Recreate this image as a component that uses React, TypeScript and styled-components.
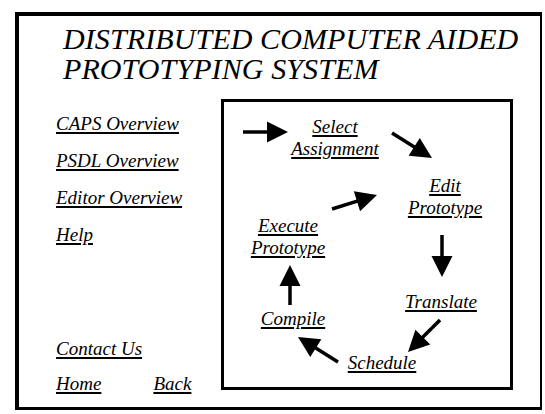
import React from "react";
import styled, { createGlobalStyle } from "styled-components";

const GlobalStyle = createGlobalStyle`
  html, body { margin: 0; padding: 0; background: #fff; }
  body { font-family: "Liberation Serif", "Times New Roman", serif; color: #000; }
`;

const Frame = styled.div`
  box-sizing: border-box;
  margin: 12px 0 0 15px;
  width: 527px;
  height: 398px;
  border: 3px solid #000;
  border-top-width: 4px;
  border-left-width: 4px;
  border-right-width: 2px;
  display: flex;
  flex-direction: column;
`;

const Title = styled.h1`
  margin: 0;
  padding: 8px 0 0 44px;
  font-size: 30px;
  line-height: 30px;
  font-style: italic;
  font-weight: normal;
  letter-spacing: 0.1px;
`;

const Body = styled.div`
  flex: 1;
  display: grid;
  grid-template-columns: 202px 1fr;
  margin-top: 15px;
`;

const Nav = styled.nav`
  display: flex;
  flex-direction: column;
  justify-content: space-between;
  padding: 14px 0 12px 37px;
`;

const NavGroup = styled.div<{ $gap: number }>`
  display: flex;
  flex-direction: column;
  align-items: flex-start;
  gap: ${(p) => p.$gap}px;
`;

const NavRow = styled.div`
  display: flex;
  gap: 52px;
`;

const linkText = `
  font-size: 19px;
  line-height: 22px;
  font-style: italic;
  color: #000;
  text-decoration: underline;
  text-decoration-thickness: 2px;
  text-underline-offset: 2px;
`;

const NavLink = styled.a`
  ${linkText}
`;

const Diagram = styled.div`
  position: relative;
  border: 3px solid #000;
  margin: 0 27px 17px 0;
`;

const Arrows = styled.svg`
  position: absolute;
  inset: 0;
  width: 100%;
  height: 100%;
  overflow: visible;
`;

const Node = styled.a<{ $x: number; $y: number }>`
  ${linkText}
  position: absolute;
  left: ${(p) => p.$x}px;
  top: ${(p) => p.$y}px;
  transform: translateX(-50%);
  text-align: center;
  white-space: nowrap;
`;

type Pt = [number, number];

const Arrow: React.FC<{ from: Pt; to: Pt; head?: number; half?: number }> = ({
  from,
  to,
  head = 21,
  half = 10.5,
}) => {
  const dx = to[0] - from[0];
  const dy = to[1] - from[1];
  const len = Math.hypot(dx, dy);
  const ux = dx / len;
  const uy = dy / len;
  const bx = to[0] - ux * head;
  const by = to[1] - uy * head;
  const px = -uy * half;
  const py = ux * half;
  return (
    <g>
      <line x1={from[0]} y1={from[1]} x2={bx + ux * 2} y2={by + uy * 2} stroke="#000" strokeWidth={3.5} />
      <polygon points={`${to[0]},${to[1]} ${bx + px},${by + py} ${bx - px},${by - py}`} fill="#000" />
    </g>
  );
};

const arrows: { from: Pt; to: Pt }[] = [
  { from: [19, 30], to: [64, 30] },
  { from: [168, 31], to: [208, 56] },
  { from: [108, 107], to: [153, 93] },
  { from: [218, 133], to: [218, 175] },
  { from: [216, 218], to: [184, 250] },
  { from: [114, 260], to: [74, 235] },
  { from: [66, 203], to: [66, 163] },
];

const nodes: { x: number; y: number; lines: string[] }[] = [
  { x: 111, y: 14, lines: ["Select", "Assignment"] },
  { x: 221, y: 73, lines: ["Edit", "Prototype"] },
  { x: 64, y: 113, lines: ["Execute", "Prototype"] },
  { x: 217, y: 189, lines: ["Translate"] },
  { x: 69, y: 206, lines: ["Compile"] },
  { x: 158, y: 250, lines: ["Schedule"] },
];

export default function App() {
  return (
    <>
      <GlobalStyle />
      <Frame>
        <Title>
          DISTRIBUTED COMPUTER AIDED
          <br />
          PROTOTYPING SYSTEM
        </Title>
        <Body>
          <Nav>
            <NavGroup $gap={15}>
              <NavLink href="#">CAPS Overview</NavLink>
              <NavLink href="#">PSDL Overview</NavLink>
              <NavLink href="#">Editor Overview</NavLink>
              <NavLink href="#">Help</NavLink>
            </NavGroup>
            <NavGroup $gap={13}>
              <NavLink href="#">Contact Us</NavLink>
              <NavRow>
                <NavLink href="#">Home</NavLink>
                <NavLink href="#">Back</NavLink>
              </NavRow>
            </NavGroup>
          </Nav>
          <Diagram>
            <Arrows>
              {arrows.map((a, i) => (
                <Arrow key={i} from={a.from} to={a.to} />
              ))}
            </Arrows>
            {nodes.map((n) => (
              <Node key={n.lines.join(" ")} href="#" $x={n.x} $y={n.y}>
                {n.lines.map((l, i) => (
                  <React.Fragment key={l}>
                    {i > 0 && <br />}
                    {l}
                  </React.Fragment>
                ))}
              </Node>
            ))}
          </Diagram>
        </Body>
      </Frame>
    </>
  );
}
